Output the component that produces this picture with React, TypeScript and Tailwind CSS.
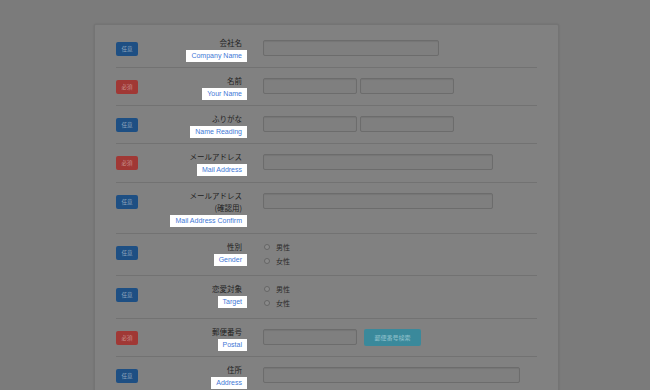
const font = { fontFamily: '"Noto Sans CJK JP", "Liberation Sans", sans-serif' }
const latin = { fontFamily: '"Liberation Sans", Arial, sans-serif' }

type Row = {
  required: boolean
  ja: string[]
  en: string
  field: 'one' | 'two' | 'radio' | 'postal'
  width?: string
  pb: string
}

const rows: Row[] = [
  { required: false, ja: ['会社名'], en: 'Company Name', field: 'one', width: 'w-[176px]', pb: 'pb-[5px]' },
  { required: true, ja: ['名前'], en: 'Your Name', field: 'two', pb: 'pb-[5px]' },
  { required: false, ja: ['ふりがな'], en: 'Name Reading', field: 'two', pb: 'pb-[5px]' },
  { required: true, ja: ['メールアドレス'], en: 'Mail Address', field: 'one', width: 'w-[230px]', pb: 'pb-[6px]' },
  { required: false, ja: ['メールアドレス', '(確認用)'], en: 'Mail Address Confirm', field: 'one', width: 'w-[230px]', pb: 'pb-[6px]' },
  { required: false, ja: ['性別'], en: 'Gender', field: 'radio', pb: 'pb-[4px]' },
  { required: false, ja: ['恋愛対象'], en: 'Target', field: 'radio', pb: 'pb-[5px]' },
  { required: true, ja: ['郵便番号'], en: 'Postal', field: 'postal', pb: 'pb-[5px]' },
  { required: false, ja: ['住所'], en: 'Address', field: 'one', width: 'w-[257px]', pb: 'pb-[5px]' },
]

function Input({ className }: { className: string }) {
  return (
    <div
      className={`h-[16px] rounded-[2px] border border-[#6c6c6c] bg-[#7f7f7f] shadow-[inset_0_1px_1px_rgba(0,0,0,0.08)] ${className}`}
    />
  )
}

function Radio({ label }: { label: string }) {
  return (
    <div className="flex h-[14px] items-center gap-[6px]">
      <span className="ml-[1px] h-[6px] w-[6px] rounded-full border border-[#666] bg-[#8a8a8a]" />
      <span className="text-[7px] text-[#2a2a2a]">{label}</span>
    </div>
  )
}

function Field({ row }: { row: Row }) {
  if (row.field === 'two') {
    return (
      <div className="mt-[3px] flex gap-[3px]">
        <Input className="w-[94px]" />
        <Input className="w-[94px]" />
      </div>
    )
  }
  if (row.field === 'radio') {
    return (
      <div className="-mt-[1px] mb-[3px] flex flex-col">
        <Radio label="男性" />
        <Radio label="女性" />
      </div>
    )
  }
  if (row.field === 'postal') {
    return (
      <div className="mt-[3px] flex items-start gap-[7px]">
        <Input className="w-[94px]" />
        <div className="flex h-[17px] w-[57px] items-center justify-center rounded-[2px] bg-[#3a899b] text-[6px] text-[#93c2cd]">
          郵便番号検索
        </div>
      </div>
    )
  }
  return <Input className={`mt-[3px] ${row.width}`} />
}

function FormRow({ row, first }: { row: Row; first: boolean }) {
  return (
    <div className={`flex items-start border-b border-[#727272] ${row.pb} ${first ? 'pt-[12px]' : 'pt-[7px]'}`}>
      <div
        className={`mt-[5px] flex h-[14px] w-[22px] shrink-0 items-center justify-center rounded-[2px] text-[5.5px] ${
          row.required ? 'bg-[#a03835] text-[#c89290]' : 'bg-[#1e4f83] text-[#90a6bd]'
        }`}
      >
        {row.required ? '必須' : '任意'}
      </div>
      <div className="flex w-[109px] shrink-0 flex-col items-end">
        {row.ja.map((t) => (
          <div key={t} className="h-[12px] pr-[5px] text-[7.5px] leading-[12px] text-[#222]">
            {t}
          </div>
        ))}
        <div className="mt-[1px] h-[12px] bg-white px-[5px] text-[7px] leading-[12px] text-[#3f78d6]" style={latin}>
          {row.en}
        </div>
      </div>
      <div className="ml-[16px]">
        <Field row={row} />
      </div>
    </div>
  )
}

export default function App() {
  return (
    <div className="h-[390px] w-[650px] overflow-hidden bg-[#7b7b7b]" style={font}>
      <div className="ml-[94px] mt-[24px] w-[465px] rounded-t-[2px] border border-b-0 border-[#747474] bg-[#818181] px-[21px] shadow-[0_0_2px_rgba(0,0,0,0.15)]">
        {rows.map((row, i) => (
          <FormRow key={row.en} row={row} first={i === 0} />
        ))}
      </div>
    </div>
  )
}
